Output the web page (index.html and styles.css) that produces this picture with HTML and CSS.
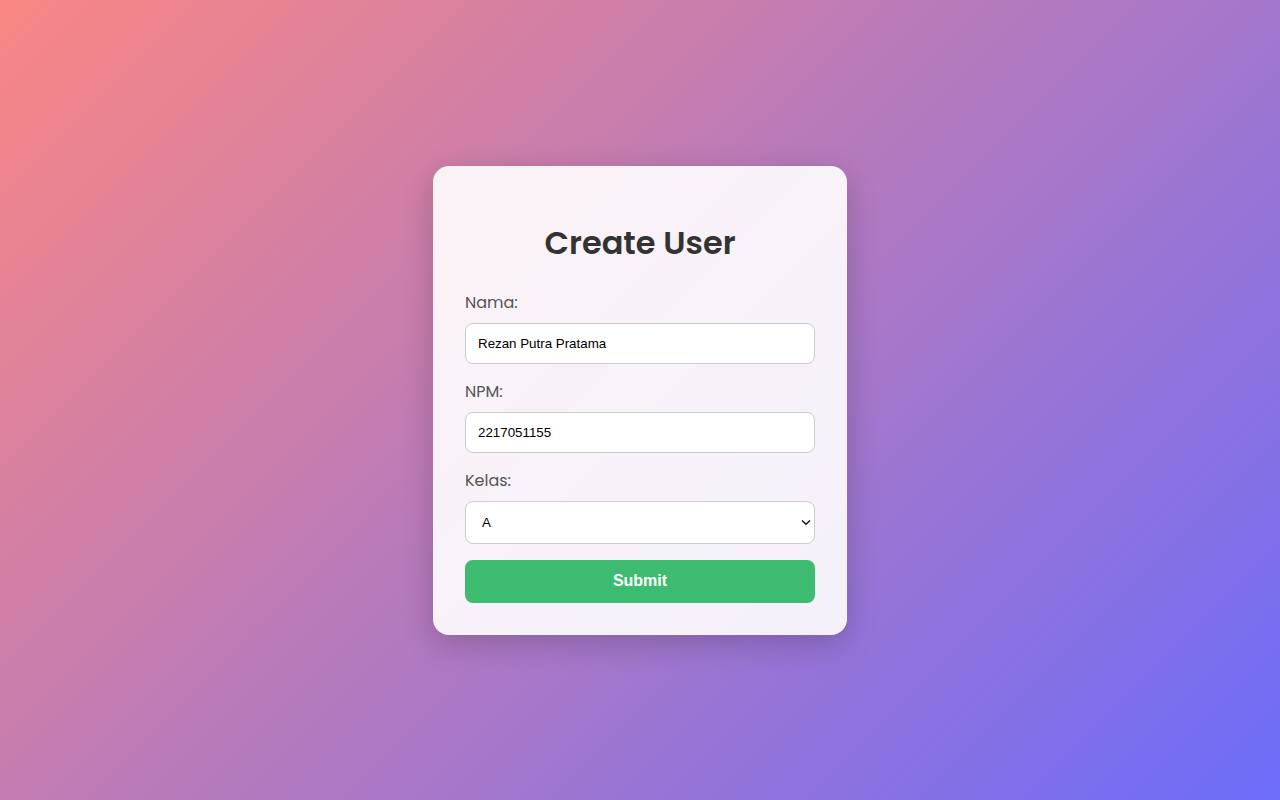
FILE: index.html
```html
<!DOCTYPE html>
<html lang="id">
<head>
<meta charset="utf-8">
<title>Create User</title>
<link rel="stylesheet" href="styles.css">
</head>
<body>
<main class="card">
<h1 class="title">Create User</h1>
<form class="form">
<label class="label" for="nama">Nama:</label>
<input class="field" type="text" id="nama" name="nama" value="Rezan Putra Pratama">
<label class="label" for="npm">NPM:</label>
<input class="field" type="text" id="npm" name="npm" value="2217051155">
<label class="label" for="kelas">Kelas:</label>
<div class="select-wrap">
<select class="field field-select" id="kelas" name="kelas">
<option>A</option>
<option>B</option>
<option>C</option>
<option>D</option>
</select>
<svg class="chevron" width="10" height="5" viewBox="0 0 10 5" aria-hidden="true"><path d="M1 0.5 L5 4.3 L9 0.5" fill="none" stroke="#000" stroke-width="1.2"/></svg>
</div>
<button class="submit" type="submit">Submit</button>
</form>
</main>
</body>
</html>
```
FILE: styles.css
```css
* {
  box-sizing: border-box;
}

body {
  margin: 0;
  min-height: 100vh;
  display: flex;
  justify-content: center;
  align-items: center;
  font-family: Poppins, Lato, sans-serif;
  background: linear-gradient(135deg, #fa8784, #6c6cfa);
}

.card {
  width: 100%;
  max-width: 414px;
  padding: 32px;
  border-radius: 16px;
  background: rgba(255, 255, 255, 0.9);
  box-shadow: 0 8px 32px rgba(0, 0, 0, 0.2);
}

.title {
  margin: 21px 0 24px;
  font-size: 32px;
  line-height: 48px;
  font-weight: 600;
  text-align: center;
  color: #333;
}

.form {
  display: flex;
  flex-direction: column;
}

.label {
  margin-bottom: 8px;
  font-size: 16px;
  line-height: 24px;
  color: #555;
}

.field {
  width: 100%;
  height: 41px;
  margin: 0 0 16px;
  padding: 0 12px;
  border: 1px solid #ccc;
  border-radius: 8px;
  background-color: #fff;
  color: #000;
  font-family: "Liberation Sans", Arial, sans-serif;
}

.select-wrap {
  position: relative;
  margin-bottom: 16px;
}

.field-select {
  display: block;
  height: 43px;
  margin: 0;
  padding: 0 16px;
  appearance: none;
}

.chevron {
  position: absolute;
  top: 0;
  bottom: 0;
  right: 4px;
  margin: auto 0;
  pointer-events: none;
}

.submit {
  height: 43px;
  padding: 0 12px;
  border: none;
  border-radius: 8px;
  background: #3dbb70;
  color: #fff;
  font-family: "Liberation Sans", Arial, sans-serif;
  font-size: 16px;
  font-weight: 700;
  cursor: pointer;
}
```
